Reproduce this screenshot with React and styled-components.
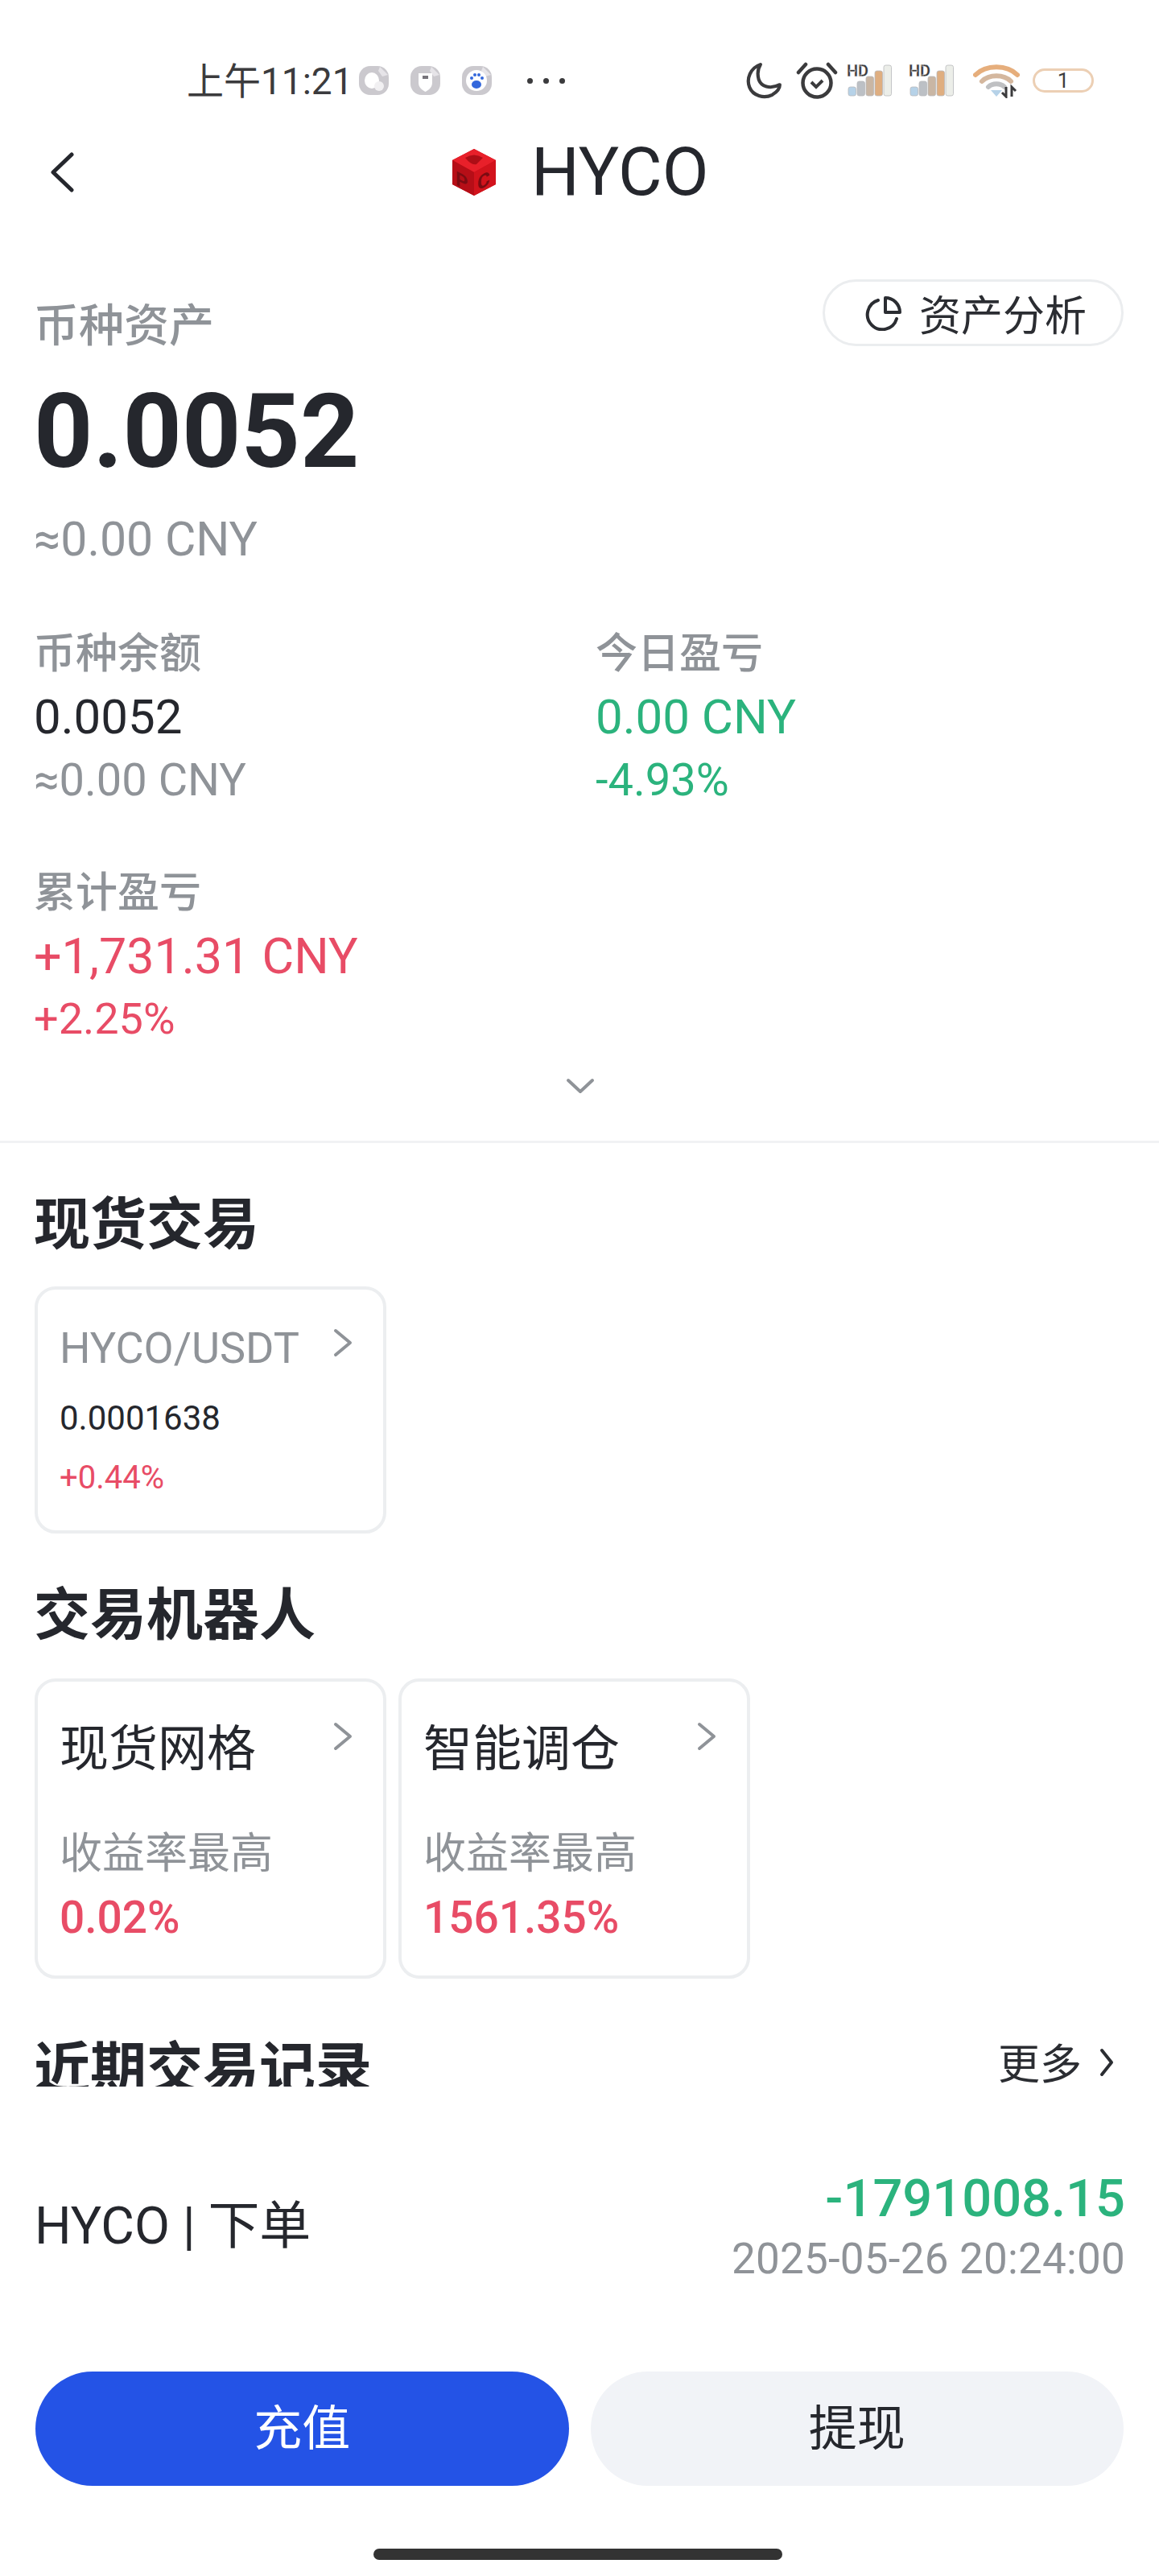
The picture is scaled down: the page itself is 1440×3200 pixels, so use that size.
import React from 'react';
import styled, { createGlobalStyle } from 'styled-components';

const GlobalStyle = createGlobalStyle`
  html, body {
    margin: 0;
    padding: 0;
    background: #fff;
  }
  * {
    box-sizing: border-box;
  }
  body {
    font-family: Roboto, 'Noto Sans CJK SC', sans-serif;
    color: #25272d;
  }
`;

const DARK = '#25272d';
const GRAY = '#8f9398';
const RED = '#e84c66';
const GREEN = '#2bb37d';

const Page = styled.div`
  width: 1440px;
  height: 3200px;
  overflow: hidden;
  background: #fff;
`;

/* status bar */
const StatusBar = styled.div`
  display: flex;
  align-items: center;
  justify-content: space-between;
  height: 150px;
  padding: 50px 81px 0 232px;
`;

const StatusGroup = styled.div`
  display: flex;
  align-items: center;
`;

const Clock = styled.span`
  font-size: 46px;
  line-height: 100px;
  margin-top: 2px;
  color: #3b3b3d;
  margin-right: 6px;
`;

const NotifyIcons = styled.div`
  display: flex;
  gap: 25px;
`;

const MoreDots = styled.div`
  display: flex;
  gap: 13px;
  margin-left: 43px;

  i {
    display: block;
    width: 7px;
    height: 7px;
    border-radius: 50%;
    background: #3b3b3d;
  }
`;

const SystemIcons = styled.div`
  display: flex;
  align-items: center;
`;

const SignalSvg = styled.svg`
  overflow: visible;
  margin-left: ${(p) => p.$left}px;
`;

const Battery = styled.div`
  width: 76px;
  height: 30px;
  margin-left: 16px;
  border: 3px solid #eccfb4;
  border-radius: 15px;
  font-size: 26px;
  line-height: 24px;
  text-align: center;
  color: #3b3b3d;
`;

/* nav header */
const Header = styled.div`
  display: flex;
  align-items: center;
  height: 124px;
  padding: 4px 0 0 62px;
`;

const CoinLogo = styled.svg`
  width: 54px;
  height: 58px;
  margin-left: 470px;
  overflow: visible;
`;

const CoinTitle = styled.h1`
  margin: 0 0 0 44px;
  font-size: 84px;
  line-height: 120px;
  font-weight: 400;
  color: ${DARK};
`;

/* asset summary */
const Summary = styled.section`
  padding: 73px 44px 0 42px;
`;

const SummaryTop = styled.div`
  display: flex;
  justify-content: space-between;
  align-items: flex-end;
`;

const Label = styled.div`
  font-size: ${(p) => p.$size || 52}px;
  line-height: 60px;
  font-weight: 500;
  color: ${GRAY};
`;

const TopLabel = styled(Label)`
  margin-bottom: -5px;
`;

const AnalysisButton = styled.div`
  display: flex;
  align-items: center;
  gap: 22px;
  width: 374px;
  height: 83px;
  padding-left: 49px;
  border: 3px solid #ebedef;
  border-radius: 42px;
  font-size: 52px;
  color: #2b2d32;
`;

const BigAmount = styled.div`
  margin-top: 46px;
  font-size: 128px;
  line-height: 120px;
  font-weight: 700;
  color: ${DARK};
`;

const Approx = styled.div`
  margin-top: 39px;
  font-size: 59px;
  line-height: 70px;
  color: ${GRAY};
`;

const StatGrid = styled.div`
  display: grid;
  grid-template-columns: 698px 1fr;
  row-gap: 76px;
  margin-top: 78px;
`;

const StatValue = styled.div`
  margin-top: 13px;
  font-size: ${(p) => p.$size || 60}px;
  line-height: 70px;
  color: ${(p) => p.$color || DARK};
`;

const StatSub = styled.div`
  margin-top: 8px;
  font-size: ${(p) => p.$size || 56}px;
  line-height: 70px;
  color: ${(p) => p.$color || GRAY};
`;

const ExpandRow = styled.div`
  display: flex;
  justify-content: center;
  height: 40px;
  margin-top: 28px;
  padding-left: 3px;
`;

const Divider = styled.div`
  height: 3px;
  margin-top: 48px;
  background: #f1f2f4;
`;

/* markets */
const Block = styled.section`
  padding: 0 44px;
`;

const SectionTitle = styled.h2`
  margin: ${(p) => p.$top}px 0 0 -2px;
  font-size: 70px;
  line-height: 90px;
  font-weight: 700;
  color: ${DARK};
`;

const CardRow = styled.div`
  display: flex;
  gap: 15px;
  margin: ${(p) => p.$top}px 0 0 -1px;
`;

const Card = styled.div`
  width: 437px;
  height: ${(p) => p.$height}px;
  padding: ${(p) => p.$top}px 28px 0 27px;
  border: 4px solid #eceef0;
  border-radius: 26px;
`;

const CardHead = styled.div`
  display: flex;
  justify-content: space-between;
  align-items: flex-start;
`;

const Chevron = styled.svg`
  flex: none;
  width: ${(p) => p.$width || 24}px;
  height: 36px;
  margin-top: ${(p) => p.$top}px;
  margin-right: ${(p) => p.$right}px;
`;

const PairName = styled.div`
  font-size: 54px;
  line-height: 60px;
  color: ${GRAY};
`;

const PairPrice = styled.div`
  margin-top: 32px;
  font-size: 42px;
  line-height: 50px;
  color: ${DARK};
`;

const PairChange = styled.div`
  margin-top: 24px;
  font-size: 40px;
  line-height: 50px;
  color: ${RED};
`;

const BotName = styled.div`
  margin-top: 3px;
  font-size: 61px;
  line-height: 80px;
  color: ${DARK};
`;

const BotLabel = styled.div`
  margin-top: 60px;
  font-size: 53px;
  line-height: 60px;
  color: ${GRAY};
`;

const BotRate = styled.div`
  margin-top: 14px;
  font-size: 55px;
  line-height: 70px;
  font-weight: 500;
  color: ${RED};
`;

/* recent records */
const RecordsHead = styled.div`
  display: flex;
  justify-content: space-between;
  height: 72px;
  margin-top: 62px;
`;

/* the heading is cut off at the bottom in the screenshot */
const RecordsTitle = styled.h2`
  height: 66px;
  margin: 6px 0 0 -2px;
  overflow: hidden;
  font-size: 70px;
  line-height: 90px;
  font-weight: 700;
  color: ${DARK};
`;

const MoreLink = styled.div`
  display: flex;
  align-items: center;
  gap: 22px;
  height: 80px;
  margin-right: 12px;
  font-size: 52px;
  color: #2b2d32;
`;

const RecordRow = styled.div`
  display: flex;
  justify-content: space-between;
  align-items: flex-start;
  margin-top: 95px;
`;

const RecordName = styled.div`
  margin: 39px 0 0 -1px;
  font-size: 64px;
  line-height: 80px;
  color: ${DARK};
`;

const RecordRight = styled.div`
  margin-right: -2px;
  text-align: right;
`;

const RecordAmount = styled.div`
  margin-top: 4px;
  font-size: 65px;
  line-height: 80px;
  font-weight: 500;
  color: ${GREEN};
`;

const RecordDate = styled.div`
  font-size: 53px;
  line-height: 70px;
  letter-spacing: 0.2px;
  color: ${GRAY};
`;

const Actions = styled.div`
  display: flex;
  gap: 27px;
  margin-top: 105px;
`;

const ActionButton = styled.div`
  flex: 1;
  height: 142px;
  border-radius: 71px;
  font-size: 60px;
  line-height: 144px;
  text-align: center;
  color: ${(p) => (p.$primary ? '#fff' : DARK)};
  background: ${(p) => (p.$primary ? '#2453e6' : '#f1f3f7')};
`;

const HomeBar = styled.div`
  width: 508px;
  height: 14px;
  margin: 78px auto 0;
  transform: translateX(-2px);
  border-radius: 7px;
  background: #333;
`;

function BackIcon() {
  return (
    <svg width="30" height="50" viewBox="0 0 30 50">
      <polyline points="27,3 4,25 27,47" fill="none" stroke={DARK} strokeWidth="5" strokeLinecap="round" strokeLinejoin="round" />
    </svg>
  );
}

function RightIcon({ top, right, width, color = GRAY }) {
  return (
    <Chevron $top={top} $right={right} $width={width} viewBox={`0 0 ${width || 24} 36`}>
      <polyline points={`3,3 ${(width || 24) - 3},18 3,33`} fill="none" stroke={color} strokeWidth="4" strokeLinecap="round" strokeLinejoin="round" />
    </Chevron>
  );
}

function NotifyIcon({ children }) {
  return (
    <svg width="39" height="38" viewBox="0 0 39 38">
      <rect x="1" y="1" width="37" height="36" rx="14" fill="#cbc9ce" />
      <path d="M27 2 L37 12 L30 14 L25 7Z" fill="#e6e4e8" />
      {children}
    </svg>
  );
}

function MoonIcon() {
  return (
    <svg width="46" height="46" viewBox="0 0 44 44">
      <path d="M18 3 C6 7 1 20 5 30 C9 40 22 44 32 39 C37 36 41 32 41 27 C29 33 19 29 16 21 C14 14 15 8 18 3Z" fill="none" stroke="#3b3b3d" strokeWidth="4" strokeLinejoin="round" />
    </svg>
  );
}

function AlarmIcon() {
  return (
    <svg width="52" height="46" viewBox="0 0 52 46" style={{ marginLeft: 17 }}>
      <circle cx="26" cy="26" r="17.5" fill="none" stroke="#3b3b3d" strokeWidth="4.5" />
      <polyline points="19,25 25,31 33,23" fill="none" stroke="#3b3b3d" strokeWidth="4" />
      <path d="M3 13 L12 3 M49 13 L40 3" stroke="#3b3b3d" strokeWidth="4.5" strokeLinecap="round" />
    </svg>
  );
}

function SignalIcon({ colors, left }) {
  const xs = [2, 13, 24, 35, 46];
  const tops = [28, 21, 15, 8, 1];
  return (
    <SignalSvg $left={left} width="56" height="40" viewBox="0 0 56 40">
      {xs.map((x, i) => (
        <rect key={x} x={x} y={tops[i]} width="9.5" height={39 - tops[i]} rx="2.5" fill={colors[i]} stroke="#b7b9bb" strokeWidth="0.8" />
      ))}
      <text x="0" y="15" fontFamily="Roboto, sans-serif" fontWeight="700" fontSize="20" fill="#3b3b3d" stroke="#fff" strokeWidth="0.3">HD</text>
    </SignalSvg>
  );
}

function WifiIcon() {
  return (
    <svg width="58" height="44" viewBox="0 0 58 44" style={{ marginLeft: 24 }}>
      <path d="M3 15 C16 2 42 2 55 15" fill="none" stroke="#e6ae7c" strokeWidth="6" strokeLinecap="round" />
      <path d="M11 23 C20 14 38 14 47 23" fill="none" stroke="#d4b79e" strokeWidth="6" strokeLinecap="round" />
      <path d="M19 30 C24 25 34 25 39 30" fill="none" stroke="#bfc0c2" strokeWidth="6" strokeLinecap="round" />
      <path d="M22 34 L36 34 L29 42Z" fill="#b6d2e8" />
      <path d="M41 30 V42 L36 37 M48 42 V30 L53 35" fill="none" stroke="#3b3b3d" strokeWidth="3" />
    </svg>
  );
}

function CubeLogo() {
  return (
    <CoinLogo viewBox="0 0 54 58">
      <polygon points="27,0 54,14 54,44 27,58 0,44 0,14" fill="#c4101a" />
      <polygon points="27,0 54,14 27,29 0,14" fill="#e8202a" />
      <polygon points="0,14 27,29 27,58 0,44" fill="#b60e17" />
      <polygon points="54,14 27,29 27,58 54,44" fill="#d2131c" />
      <path d="M16 11 Q27 4 38 11 L30 19 Q24 21 16 11Z" fill="#ad0e16" />
      <text transform="translate(4 44) skewY(28)" fontFamily="Roboto, sans-serif" fontWeight="700" fontSize="24" fill="#7c0b12">P</text>
      <text transform="translate(31 52) skewY(-28)" fontFamily="Roboto, sans-serif" fontWeight="700" fontSize="24" fill="#7c0b12">C</text>
    </CoinLogo>
  );
}

function PieIcon() {
  return (
    <svg width="46" height="44" viewBox="0 0 46 44">
      <path d="M17 6 A18.5 18.5 0 1 0 40 29" fill="none" stroke="#2b2d32" strokeWidth="4" strokeLinecap="round" />
      <path d="M26 3 V21 H44 C44 11 36 3 26 3Z" fill="none" stroke="#2b2d32" strokeWidth="4" strokeLinejoin="round" />
    </svg>
  );
}

function App() {
  return (
    <Page>
      <GlobalStyle />
      <StatusBar>
        <StatusGroup>
          <Clock>上午11:21</Clock>
          <NotifyIcons>
            <NotifyIcon>
              <ellipse cx="17" cy="19" rx="9" ry="10" fill="#fff" />
              <circle cx="26" cy="26" r="6" fill="#f1f0f2" />
            </NotifyIcon>
            <NotifyIcon>
              <path d="M11 10 H28 V22 C28 28 23 31 19.5 33 C16 31 11 28 11 22Z" fill="#fff" />
              <rect x="16" y="13" width="7" height="4" fill="#77757b" />
            </NotifyIcon>
            <NotifyIcon>
              <circle cx="19" cy="19" r="13" fill="#fff" />
              <ellipse cx="19" cy="24" rx="6" ry="5" fill="#3468dc" />
              <circle cx="13" cy="16" r="2" fill="#3468dc" />
              <circle cx="17" cy="12" r="2" fill="#3468dc" />
              <circle cx="22" cy="12" r="2" fill="#3468dc" />
              <circle cx="26" cy="16" r="2" fill="#3468dc" />
            </NotifyIcon>
          </NotifyIcons>
          <MoreDots>
            <i />
            <i />
            <i />
          </MoreDots>
        </StatusGroup>
        <SystemIcons>
          <MoonIcon />
          <AlarmIcon />
          <SignalIcon left={11} colors={['#b6d2e8', '#bcc0c5', '#c9b6a4', '#dfae80', '#eceee9']} />
          <SignalIcon left={21} colors={['#b6d2e8', '#bcc0c5', '#c9b6a4', '#dfae80', '#eceee9']} />
          <WifiIcon />
          <Battery>1</Battery>
        </SystemIcons>
      </StatusBar>

      <Header>
        <BackIcon />
        <CubeLogo />
        <CoinTitle>HYCO</CoinTitle>
      </Header>

      <Summary>
        <SummaryTop>
          <TopLabel $size={56}>币种资产</TopLabel>
          <AnalysisButton>
            <PieIcon />
            资产分析
          </AnalysisButton>
        </SummaryTop>
        <BigAmount>0.0052</BigAmount>
        <Approx>≈0.00 CNY</Approx>
        <StatGrid>
          <div>
            <Label>币种余额</Label>
            <StatValue>0.0052</StatValue>
            <StatSub>≈0.00 CNY</StatSub>
          </div>
          <div>
            <Label>今日盈亏</Label>
            <StatValue $color={GREEN}>0.00 CNY</StatValue>
            <StatSub $color={GREEN}>-4.93%</StatSub>
          </div>
          <div>
            <Label>累计盈亏</Label>
            <StatValue $color={RED} $size={61}>+1,731.31 CNY</StatValue>
            <StatSub $color={RED} $size={54}>+2.25%</StatSub>
          </div>
        </StatGrid>
        <ExpandRow>
          <svg width="36" height="40" viewBox="0 0 36 40">
            <polyline points="3,13 18,27 33,13" fill="none" stroke={GRAY} strokeWidth="4" strokeLinecap="round" strokeLinejoin="round" />
          </svg>
        </ExpandRow>
      </Summary>
      <Divider />

      <Block>
        <SectionTitle $top={57}>现货交易</SectionTitle>
        <CardRow $top={31}>
          <Card $height={307} $top={43}>
            <CardHead>
              <PairName>HYCO/USDT</PairName>
              <RightIcon top={5} right={10} />
            </CardHead>
            <PairPrice>0.0001638</PairPrice>
            <PairChange>+0.44%</PairChange>
          </Card>
        </CardRow>

        <SectionTitle $top={57}>交易机器人</SectionTitle>
        <CardRow $top={33}>
          <Card $height={373} $top={41}>
            <CardHead>
              <BotName>现货网格</BotName>
              <RightIcon top={9} right={10} />
            </CardHead>
            <BotLabel>收益率最高</BotLabel>
            <BotRate>0.02%</BotRate>
          </Card>
          <Card $height={373} $top={41}>
            <CardHead>
              <BotName>智能调仓</BotName>
              <RightIcon top={9} right={10} />
            </CardHead>
            <BotLabel>收益率最高</BotLabel>
            <BotRate>1561.35%</BotRate>
          </Card>
        </CardRow>

        <RecordsHead>
          <RecordsTitle>近期交易记录</RecordsTitle>
          <MoreLink>
            更多
            <RightIcon top={4} right={0} width={18} color="#2b2d32" />
          </MoreLink>
        </RecordsHead>
        <RecordRow>
          <RecordName>HYCO | 下单</RecordName>
          <RecordRight>
            <RecordAmount>-1791008.15</RecordAmount>
            <RecordDate>2025-05-26 20:24:00</RecordDate>
          </RecordRight>
        </RecordRow>

        <Actions>
          <ActionButton $primary>充值</ActionButton>
          <ActionButton>提现</ActionButton>
        </Actions>
        <HomeBar />
      </Block>
    </Page>
  );
}

export default App;
